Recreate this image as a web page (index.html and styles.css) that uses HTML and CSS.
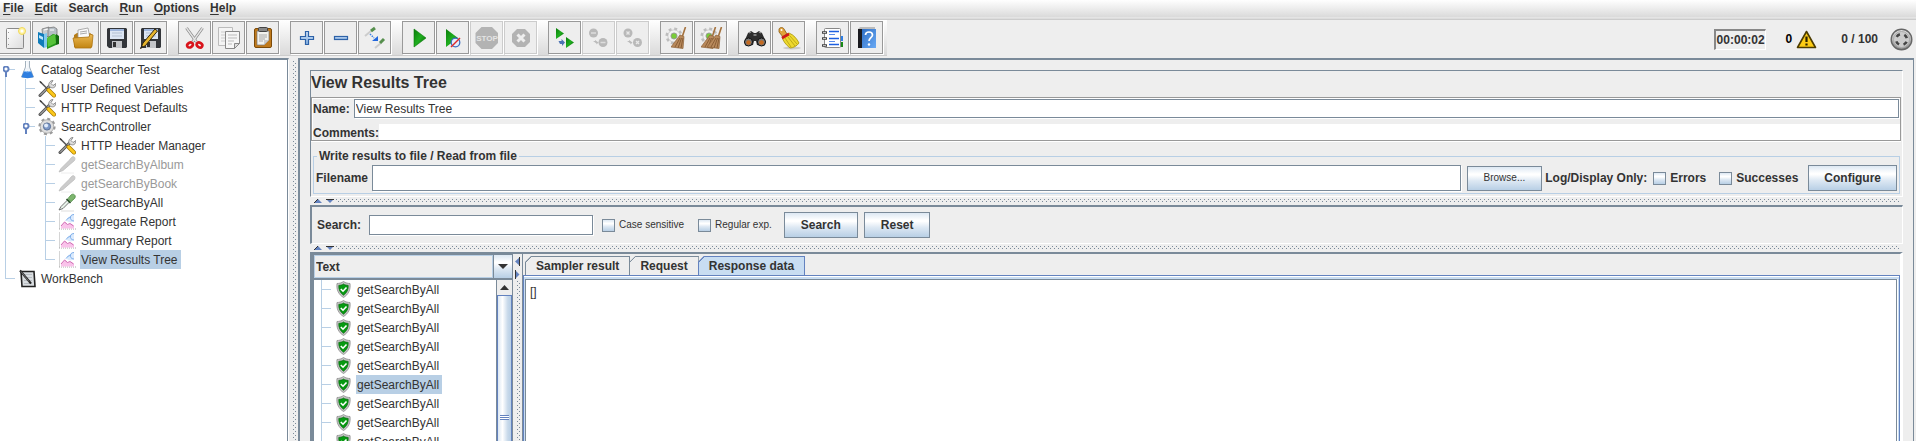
FILE: index.html
```html
<!DOCTYPE html>
<html lang="en">
<head>
<meta charset="utf-8">
<title>Catalog Searcher Test</title>
<link rel="stylesheet" href="styles.css">
</head>
<body>
<svg class="defs" aria-hidden="true">
  <defs>
    <linearGradient id="g-green" x1="0" y1="0" x2="1" y2="1"><stop offset="0" stop-color="#0a7d0a"/><stop offset=".5" stop-color="#1fae1f"/><stop offset="1" stop-color="#045a04"/></linearGradient>
    <linearGradient id="g-folder" x1="0" y1="0" x2="0" y2="1"><stop offset="0" stop-color="#eebb55"/><stop offset="1" stop-color="#c28512"/></linearGradient>
    <linearGradient id="g-paper" x1="0" y1="0" x2="1" y2="1"><stop offset="0" stop-color="#fff"/><stop offset="1" stop-color="#dcdcdc"/></linearGradient>
    <linearGradient id="g-plus" x1="0" y1="0" x2="0" y2="1"><stop offset="0" stop-color="#cfe2f7"/><stop offset="1" stop-color="#85b0e0"/></linearGradient>
    <linearGradient id="g-book" x1="0" y1="0" x2="1" y2="1"><stop offset="0" stop-color="#2f6fc4"/><stop offset="1" stop-color="#6aaaf5"/></linearGradient>
    <linearGradient id="g-metal" x1="0" y1="0" x2="0" y2="1"><stop offset="0" stop-color="#e6e6e6"/><stop offset="1" stop-color="#8c8c8c"/></linearGradient>
    <symbol id="floppy" viewBox="0 0 20 20">
      <path d="M1 0h18l1 1v18l-1 1H2l-2-2V1z" fill="#33363a"/><rect x="3" y="1" width="14" height="10" fill="#dce6f4"/>
      <path d="M3 1h14v2H3z" fill="#9fb6dc"/><path d="M5 5h10M5 8h10" stroke="#b3c0d2"/><rect x="5" y="13" width="10" height="7" fill="#c3c5c8"/><rect x="6" y="14" width="3" height="5" fill="#333"/>
    </symbol>
    <symbol id="tools" viewBox="0 0 18 18">
      <path d="M2 16L12 6" stroke="#555" stroke-width="3" stroke-linecap="round"/><path d="M2 16L12 6" stroke="#ccc" stroke-width="1"/>
      <path d="M11 7c-1-3 1-6 4-6l-2 3 2 2 3-2c0 4-3 5-5 4z" fill="#ddd" stroke="#777" stroke-width=".8"/>
      <path d="M2 2l8 8" stroke="#555" stroke-width="1.6"/><path d="M1 1l3 2-1 1z" fill="#333"/><path d="M10.500 10.500l5.500 5.500" stroke="#a87a00" stroke-width="4" stroke-linecap="round"/><path d="M10.500 10.500l5.500 5.500" stroke="#fcc81c" stroke-width="2.600" stroke-linecap="round"/>
    </symbol>
    <symbol id="dropper" viewBox="0 0 18 18">
      <path d="M1 16.500L3 13l7-7 2 2-7 7z" fill="#e8f2ea" stroke="#666" stroke-width=".9"/><path d="M8.500 5.500l4 4" stroke="#234a23" stroke-width="1.600"/>
      <path d="M10 5l3-3.500c2-2 5.500 0 3.800 3.200L13 8.200z" fill="#7db56e" stroke="#4a8a40" stroke-width=".8"/><path d="M3 17.500h13" stroke="#ddd"/>
    </symbol>
    <symbol id="dropper-off" viewBox="0 0 18 18">
      <path d="M1 16.500L3 13l8-8 2.500-3c2-2 4.500 0 3 3L13 8l-8 7z" fill="#ccc" stroke="#bbb" stroke-width=".8"/><path d="M3 17.500h13" stroke="#eee"/>
    </symbol>
    <symbol id="chart" viewBox="0 0 18 18">
      <path d="M1.500 1v16M1 16.500h17" stroke="#aaa" fill="none" stroke-dasharray="1 1"/>
      <path d="M3 16v-3l4-4 3 3 3-1 3 2v3z" fill="#f9c3ea"/><path d="M3 13.500l3.500-4 3 2.500 2.500-1 3.500 2.500" stroke="#d070b4" fill="none"/>
      <path d="M8 7.500l3-3.500 5-2v6.500l-3 1.500c-2 0-4-1-5-2.500z" fill="#dbeafc"/><path d="M16 2c-3 0-4 2-3.500 4s2 2.500 3.500 2.500M12.500 5c-2 0-3.500 1.500-4.500 3" stroke="#7badea" fill="none"/>
    </symbol>
    <symbol id="flask" viewBox="0 0 18 19">
      <path d="M7.500 1v6L3.500 17h12L11.500 7V1" fill="#eef3f8" stroke="#9aa8b5" stroke-width=".9"/><path d="M6 11h7l2.500 6c-3 1.500-9 1.500-12 0z" fill="#2f7fe0"/><path d="M6 11c2 1 5 1 7 0" stroke="#a9d0fa" fill="none"/><path d="M8.800 2v6" stroke="#fff"/>
    </symbol>
    <symbol id="gear" viewBox="0 0 20 20">
      <circle cx="10" cy="10" r="8.300" fill="none" stroke="#9a9a9a" stroke-width="2.600" stroke-dasharray="3.300 3.220"/><circle cx="10" cy="10" r="7.500" fill="#dedede" stroke="#999" stroke-width=".8"/>
      <circle cx="10" cy="10" r="4" fill="#7d99c8" stroke="#556b92"/><circle cx="9" cy="9" r="2.200" fill="#e0ebfb"/>
    </symbol>
    <symbol id="bench" viewBox="0 0 18 18">
      <path d="M3 2h13l1 15H4z" fill="#d9dde0" stroke="#222" stroke-width="1.600"/><path d="M6 5h8M6 8h8M6 11h8M6 14h8" stroke="#aeb4ba" stroke-width=".8"/><path d="M2 1l11 13" stroke="#222" stroke-width="2"/><path d="M3 2l8 10" stroke="#aaa" stroke-width=".6"/>
    </symbol>
    <symbol id="shield" viewBox="0 0 15 17">
      <path d="M7.500 .5C9.500 2 12 2.500 14 2.500c.8 6-1.500 11-6.500 14C2.500 13.500 .2 8.500 1 2.500c2 0 4.500-.5 6.500-2z" fill="#c5c5c5" stroke="#8c8c8c" stroke-width=".8"/>
      <path d="M7.500 3c1.500 1 3 1.300 4.700 1.400.3 4-1.200 7.300-4.700 9.800C4 11.700 2.500 8.400 2.800 4.400 4.500 4.300 6 4 7.500 3z" fill="#079a12" stroke="#04650b" stroke-width=".7"/><path d="M4.800 8l2.200 2.200 3.500-3.700" stroke="#fff" stroke-width="1.600" fill="none"/>
    </symbol>
    <symbol id="broom" viewBox="0 0 16 22">
      <path d="M14.500 0l-3 9" stroke="#a4713c" stroke-width="1.600"/><path d="M9 8l4 1.500-1 12L0 20z" fill="#b98a5c" stroke="#8c6138" stroke-width=".7"/><path d="M9 11L4 20M10.500 11L7 21M12 11l-2 10" stroke="#7e532c" stroke-width=".8"/>
    </symbol>
    <symbol id="cog" viewBox="0 0 20 20">
      <circle cx="10" cy="10" r="8" fill="none" stroke="#bdbdbd" stroke-width="3" stroke-dasharray="3.200 3.083"/><circle cx="10" cy="10" r="6.800" fill="#f2f2f2" stroke="#bbb" stroke-width=".7"/><circle cx="10" cy="10" r="3.400" fill="#79cc38" stroke="#999"/>
    </symbol>
  </defs>
</svg>

<nav class="menubar" aria-label="Main menu">
  <button type="button"><u>F</u>ile</button>
  <button type="button"><u>E</u>dit</button>
  <button type="button">Search</button>
  <button type="button"><u>R</u>un</button>
  <button type="button"><u>O</u>ptions</button>
  <button type="button"><u>H</u>elp</button>
</nav>

<header class="toolbar">
  <div class="tools" role="toolbar" aria-label="Tools">
    <div class="group">
      <button type="button" aria-label="New"><svg viewBox="1 1 31 31"><rect x="8.500" y="7.500" width="17" height="20" rx="1" fill="url(#g-paper)" stroke="#8a8a8a"/><path d="M10.500 11v1M10.500 17v1M10.500 23v1" stroke="#999"/><circle cx="24" cy="10" r="3.500" fill="#fff3a0" stroke="#f0d85a"/><circle cx="24" cy="10" r="1.500" fill="#fff"/></svg></button>
      <button type="button" aria-label="Templates"><svg viewBox="1 1 31 31"><path d="M10 8l7-2v9l-6 2z" fill="#c8ccd0" stroke="#777" stroke-width=".8"/><path d="M16 7l6-1 3 2v8h-9z" fill="#b6bfc6" stroke="#777" stroke-width=".8"/><path d="M12 9l4-1M18 9h4" stroke="#fff"/><path d="M6 11l6 2v14l-6-5z" fill="#0f7cba"/><path d="M12 13l3-1v14l-3 1z" fill="#7fc8ee"/><path d="M7 14l4 2v3l-4-2z" fill="#bfe6fa"/><path d="M15 17l6-4 3 1v10l-9 4z" fill="#25951c"/><path d="M15 17l8-4 1 9-8 4z" fill="#57c33b"/><path d="M24 13l3 2v8l-3 1z" fill="#136a10"/></svg></button>
      <button type="button" aria-label="Open"><svg viewBox="1 1 31 31"><path d="M8 14l3-2h13l2 2v12H8z" fill="#b67c16"/><path d="M12 9l10-2 2 10H12z" fill="#fafafa" stroke="#999" stroke-width=".8"/><path d="M14 11l7-1M14 13l7-1" stroke="#aaa"/><path d="M7 17l16-1 1-3 3 1-1 11-1 2H9z" fill="url(#g-folder)" stroke="#ad7512" stroke-width=".8"/></svg></button>
      <button type="button" aria-label="Save"><svg viewBox="1 1 31 31"><use href="#floppy" x="7" y="7" width="20" height="20"/></svg></button>
      <button type="button" aria-label="Save as"><svg viewBox="1 1 31 31"><use href="#floppy" x="7" y="7" width="20" height="20"/><path d="M6.500 27.500L9 22 21 8l2.500 2L11.500 24.500z" fill="#e7b62d" stroke="#33270a"/><path d="M6.500 27.500l1-3.500 2 2z" fill="#222"/></svg></button>
    </div>
    <div class="group">
      <button type="button" aria-label="Cut"><svg viewBox="1 1 31 31"><path d="M8.500 7l10 14M24.500 7l-10 14" stroke="#888" stroke-width="3"/><path d="M8.500 7l10 14M24.500 7l-10 14" stroke="#e5e5e5" stroke-width="1.400"/><ellipse cx="12" cy="24" rx="3" ry="2.300" transform="rotate(-35 12 24)" fill="none" stroke="#d8141b" stroke-width="2.600"/><ellipse cx="21.500" cy="24" rx="3" ry="2.300" transform="rotate(35 21.500 24)" fill="none" stroke="#d8141b" stroke-width="2.600"/></svg></button>
      <button type="button" aria-label="Copy"><svg viewBox="1 1 31 31"><path d="M6.500 6.500h14v18h-14z" fill="#f4f4f4" stroke="#bbb"/><path d="M9 11h8M9 14h5M9 17h5M9 20h5" stroke="#ccc"/><path d="M13.500 10.500h14v12l-5 5h-9z" fill="#f6f6f6" stroke="#888"/><path d="M16 14h9M16 17h9M16 20h6M16 23h4" stroke="#bbb"/><path d="M22.500 27.500v-5h5z" fill="#ddd" stroke="#888"/></svg></button>
      <button type="button" aria-label="Paste"><svg viewBox="1 1 31 31"><rect x="8.500" y="7.500" width="17" height="19" rx="1.500" fill="#c07a1c" stroke="#7c4b0a"/><path d="M11 10h12v9l-5 5h-7z" fill="#f2f2ee" stroke="#777" stroke-width=".7"/><path d="M13 14h8M13 16h8M13 18h6M13 20h4" stroke="#aaa"/><path d="M18 24v-5h5z" fill="#ccc"/><rect x="12.500" y="6.500" width="9" height="4" rx="1" fill="#888" stroke="#444"/></svg></button>
    </div>
    <div class="group">
      <button type="button" aria-label="Expand all"><svg viewBox="1 1 31 31"><path d="M15.500 10.500h3v5h5v3h-5v5h-3v-5h-5v-3h5z" fill="url(#g-plus)" stroke="#2d62a8" stroke-width="1.200"/></svg></button>
      <button type="button" aria-label="Collapse all"><svg viewBox="1 1 31 31"><rect x="10.500" y="15.500" width="13" height="3" fill="url(#g-plus)" stroke="#2d62a8" stroke-width="1.200"/></svg></button>
      <button type="button" aria-label="Toggle"><svg viewBox="1 1 31 31"><path d="M7 15l6-5" stroke="#ccc" stroke-width="2"/><path d="M13 10l4-3" stroke="#568f4d" stroke-width="3"/><path d="M17 27l6-5" stroke="#ccc" stroke-width="2"/><path d="M22 22l4-4" stroke="#568f4d" stroke-width="3"/><path d="M12 13l4 4" stroke="#3b83e8" stroke-width="1.500" stroke-dasharray="1.500 1"/><path d="M20 15v5h-6z" fill="#2167dd"/></svg></button>
    </div>
    <div class="group">
      <button type="button" aria-label="Start"><svg viewBox="1 1 31 31"><path d="M12 8l12 9-12 9z" fill="url(#g-green)" stroke="#0a7a0a" stroke-width=".6"/></svg></button>
      <button type="button" aria-label="Start no pauses"><svg viewBox="1 1 31 31"><path d="M10 8l12 9-12 9z" fill="url(#g-green)"/><circle cx="19.500" cy="21.500" r="4.300" fill="#e4eefc" stroke="#3d6fc0" stroke-width="1.300"/><path d="M15 26l9-9" stroke="#e02828" stroke-width="1.400"/></svg></button>
      <button type="button" disabled aria-label="Stop"><svg viewBox="1 1 31 31"><path d="M11.500 6h10.500l6 6v10l-6 6H11.500l-6-6V12z" fill="#b3b3b3"/><text x="17" y="20" class="stop">STOP</text></svg></button>
      <button type="button" disabled aria-label="Shutdown"><svg viewBox="1 1 31 31"><path d="M13 8h8l5 5v8l-5 5h-8l-5-5v-8z" fill="#b3b3b3"/><path d="M13.500 13.500l7 7M20.500 13.500l-7 7" stroke="#eee" stroke-width="3"/></svg></button>
    </div>
    <div class="group">
      <button type="button" aria-label="Remote start all"><svg viewBox="1 1 31 31"><path d="M8 7l8 5.500L8 18z" fill="url(#g-green)"/><path d="M18 16l8 5.500L18 27z" fill="url(#g-green)"/><path d="M10.500 20h3v-2l3.500 3.500-3 3.500v-2h-2z" fill="#4e74b4"/></svg></button>
      <button type="button" disabled aria-label="Remote stop all"><svg viewBox="1 1 31 31"><circle cx="11.500" cy="12" r="4.500" fill="#b9b9b9"/><circle cx="21" cy="21.500" r="4.500" fill="#b9b9b9"/><path d="M9 12h5M18.500 21.500h5" stroke="#ddd" stroke-width="1.500"/><path d="M11 20h2v-1l3.500 2.500-2 2v-1z" fill="#bbb"/></svg></button>
      <button type="button" disabled aria-label="Remote shutdown all"><svg viewBox="1 1 31 31"><circle cx="12" cy="12" r="4.500" fill="#b9b9b9"/><circle cx="21.500" cy="21.500" r="4.500" fill="#b9b9b9"/><path d="M10.500 10.500l3 3M13.500 10.500l-3 3M20 20l3 3M23 20l-3 3" stroke="#e8e8e8" stroke-width="1.300"/><path d="M11 20h2v-1l3.500 2.500-2 2v-1z" fill="#bbb"/></svg></button>
    </div>
    <div class="group">
      <button type="button" aria-label="Clear"><svg viewBox="1 1 31 31"><use href="#cog" x="5" y="6" width="18" height="18"/><use href="#broom" x="11" y="6" width="16" height="22"/></svg></button>
      <button type="button" aria-label="Clear all"><svg viewBox="1 1 31 31"><use href="#cog" x="6" y="6" width="18" height="18"/><use href="#broom" x="7" y="6" width="16" height="22"/><use href="#broom" x="13" y="6" width="16" height="22"/></svg></button>
    </div>
    <div class="group">
      <button type="button" aria-label="Find"><svg viewBox="1 1 31 31"><path d="M6 21l4-9 3-2 3 2h2l3-2 3 2 4 9-2 4-7-1-1-4h-2l-1 4-7 1z" fill="#2d2d2d"/><path d="M11 12l2-1M21 11l2 1M15.500 14h3" stroke="#999" stroke-width="1.300"/><circle cx="10.500" cy="21" r="4" fill="#777" stroke="#111"/><circle cx="23.500" cy="21" r="4" fill="#777" stroke="#111"/><circle cx="10.500" cy="21.500" r="2.300" fill="#c46a21"/><circle cx="23.500" cy="21.500" r="2.300" fill="#c46a21"/></svg></button>
      <button type="button" aria-label="Reset search"><svg viewBox="1 1 31 31"><ellipse cx="20" cy="27" rx="9" ry="1.500" fill="#ccc"/><path d="M7 8c1-2 4-2 5 0l3 5-4 3-4-5z" fill="#e0a33c" stroke="#8b5a12" stroke-width=".8"/><circle cx="9.500" cy="9" r="1" fill="#fff"/><path d="M10 16l7-4c5 2 8 6 10 10-2 3-6 5-9 5-4-3-7-7-8-11z" fill="#eed92e" stroke="#a4920d" stroke-width=".8"/><path d="M13 17l6 9M16 16l7 9M18 15l7 8" stroke="#b8a516" stroke-width=".9"/><path d="M10 17l7-4" stroke="#cf1a1a" stroke-width="2.600"/></svg></button>
    </div>
    <div class="group">
      <button type="button" aria-label="Function helper"><svg viewBox="1 1 31 31"><rect x="22" y="15" width="5" height="5" fill="#2e7fe6"/><rect x="22" y="21" width="5" height="5" fill="#188a18"/><rect x="8.500" y="7.500" width="16" height="19" rx="1" fill="#fff" stroke="#888"/><path d="M13 10.500h10M13 17.500h10M13 23.500h10" stroke="#1d5fe0" stroke-width="1.300"/><path d="M13 13.500h6M13 20.500h6" stroke="#5a8bea"/><path d="M6 11.500h5M6 17.500h5M6 24.500h5" stroke="#444" stroke-width="2.400"/><path d="M7 11.500h3M7 17.500h3M7 24.500h3" stroke="#ddd" stroke-width=".8"/></svg></button>
      <button type="button" aria-label="Help"><svg viewBox="1 1 31 31"><path d="M8 8l2-2h15v2z" fill="#bbb"/><rect x="8" y="8" width="4" height="19" fill="#1b1b1f"/><rect x="12" y="8" width="14" height="19" fill="url(#g-book)"/><path d="M15.500 14c0-4 7-4 7 0 0 2.500-3.500 3-3.500 6" fill="none" stroke="#fff" stroke-width="1.700"/><circle cx="19" cy="23.500" r="1.200" fill="#fff"/></svg></button>
    </div>
  </div>
  <div class="status">
    <output class="timer">00:00:02</output>
    <span class="errors">0 <svg width="21" height="19" viewBox="0 0 21 19" role="img" aria-label="Errors logged"><path d="M10.500 1.500L19.500 17.500H1.500z" fill="#fccb14" stroke="#4d3c00" stroke-width="1.600" stroke-linejoin="round"/><path d="M10.500 6.500v5.500M10.500 13.500v2" stroke="#2a2200" stroke-width="2.200"/></svg></span>
    <span class="threads">0 / 100</span>
    <svg class="running" width="23" height="23" viewBox="0 0 23 23" role="img" aria-label="Idle"><circle cx="11.500" cy="11.500" r="10.300" fill="url(#g-metal)" stroke="#666" stroke-width="1.400"/><circle cx="11.500" cy="11.500" r="8" fill="#ccc" stroke="#aaa"/><circle cx="11.500" cy="11.500" r="5.500" fill="none" stroke="#444" stroke-width="2.600" stroke-dasharray="4 4.640" stroke-dashoffset="-2.300"/></svg>
  </div>
</header>

<div class="workspace">
  <aside class="plan">
    <ul class="tree">
      <li>
        <div class="row"><button type="button" class="knob" aria-label="Collapse Catalog Searcher Test"></button><svg><use href="#flask"/></svg><span>Catalog Searcher Test</span></div>
        <ul>
          <li><div class="row"><svg><use href="#tools"/></svg><span>User Defined Variables</span></div></li>
          <li><div class="row"><svg><use href="#tools"/></svg><span>HTTP Request Defaults</span></div></li>
          <li>
            <div class="row"><button type="button" class="knob" aria-label="Collapse SearchController"></button><svg><use href="#gear"/></svg><span>SearchController</span></div>
            <ul>
              <li><div class="row"><svg><use href="#tools"/></svg><span>HTTP Header Manager</span></div></li>
              <li><div class="row off"><svg><use href="#dropper-off"/></svg><span>getSearchByAlbum</span></div></li>
              <li><div class="row off"><svg><use href="#dropper-off"/></svg><span>getSearchByBook</span></div></li>
              <li><div class="row"><svg><use href="#dropper"/></svg><span>getSearchByAll</span></div></li>
              <li><div class="row"><svg><use href="#chart"/></svg><span>Aggregate Report</span></div></li>
              <li><div class="row"><svg><use href="#chart"/></svg><span>Summary Report</span></div></li>
              <li><div class="row selected"><svg><use href="#chart"/></svg><span>View Results Tree</span></div></li>
            </ul>
          </li>
        </ul>
      </li>
      <li><div class="row"><svg><use href="#bench"/></svg><span>WorkBench</span></div></li>
    </ul>
  </aside>
  <div class="split-v"></div>

  <main class="editor">
    <section class="config">
      <h1>View Results Tree</h1>
      <div class="identity">
        <div class="field"><label for="name">Name:</label><input id="name" class="text" type="text" value="View Results Tree"></div>
        <div class="field comments"><label for="comments">Comments:</label><input id="comments" type="text"></div>
      </div>
      <fieldset class="file">
        <legend>Write results to file / Read from file</legend>
        <div class="file-row">
          <label for="filename">Filename</label>
          <input id="filename" class="text" type="text">
          <button type="button" class="btn small browse">Browse...</button>
          <span class="only">Log/Display Only:</span>
          <label class="check"><input type="checkbox">Errors</label>
          <label class="check"><input type="checkbox">Successes</label>
          <button type="button" class="btn configure">Configure</button>
        </div>
      </fieldset>
    </section>
    <div class="split-h"><svg width="22" height="5" viewBox="0 0 22 5"><path d="M5 0l4 4H1z" fill="#6382bf"/><path d="M5 0L1 4" stroke="#333"/><path d="M13 0h8l-4 4z" fill="#6382bf"/><path d="M13 .5h8" stroke="#333"/></svg></div>
    <section class="search">
      <label for="query">Search:</label>
      <input id="query" class="text" type="text">
      <label class="check small"><input type="checkbox">Case sensitive</label>
      <label class="check small"><input type="checkbox">Regular exp.</label>
      <button type="button" class="btn">Search</button>
      <button type="button" class="btn">Reset</button>
    </section>
    <div class="split-h"><svg width="22" height="5" viewBox="0 0 22 5"><path d="M5 0l4 4H1z" fill="#6382bf"/><path d="M5 0L1 4" stroke="#333"/><path d="M13 0h8l-4 4z" fill="#6382bf"/><path d="M13 .5h8" stroke="#333"/></svg></div>
    <section class="results">
      <div class="samples">
        <div class="combo">
          <select aria-label="Renderer"><option>Text</option></select>
          <span class="combo-arrow"><svg width="10" height="5" viewBox="0 0 10 5"><path d="M0 0h10L5 5z" fill="#333"/></svg></span>
        </div>
        <div class="list">
          <ul class="tree">
            <li><div class="row"><svg><use href="#shield"/></svg><span>getSearchByAll</span></div></li>
            <li><div class="row"><svg><use href="#shield"/></svg><span>getSearchByAll</span></div></li>
            <li><div class="row"><svg><use href="#shield"/></svg><span>getSearchByAll</span></div></li>
            <li><div class="row"><svg><use href="#shield"/></svg><span>getSearchByAll</span></div></li>
            <li><div class="row"><svg><use href="#shield"/></svg><span>getSearchByAll</span></div></li>
            <li><div class="row selected"><svg><use href="#shield"/></svg><span>getSearchByAll</span></div></li>
            <li><div class="row"><svg><use href="#shield"/></svg><span>getSearchByAll</span></div></li>
            <li><div class="row"><svg><use href="#shield"/></svg><span>getSearchByAll</span></div></li>
            <li><div class="row"><svg><use href="#shield"/></svg><span>getSearchByAll</span></div></li>
          </ul>
          <div class="scrollbar">
            <button type="button" aria-label="Scroll up"><svg width="9" height="5" viewBox="0 0 9 5"><path d="M0 5h9L4.500 0z" fill="#333"/></svg></button>
            <div class="thumb"><i></i></div>
          </div>
        </div>
      </div>
      <div class="split-v inner"><svg width="5" height="22" viewBox="0 0 5 22"><path d="M5 0v9L0 4.500z" fill="#6382bf"/><path d="M4.500 0v9" stroke="#333"/><path d="M0 13v9l4.500-4.500z" fill="#6382bf"/><path d="M.5 13v9" stroke="#333"/></svg></div>
      <div class="detail">
        <div class="tabs" role="tablist">
          <button type="button" role="tab" aria-selected="false">Sampler result</button>
          <button type="button" role="tab" aria-selected="false">Request</button>
          <button type="button" role="tab" aria-selected="true">Response data</button>
        </div>
        <div class="body"><textarea readonly aria-label="Response data">[]</textarea></div>
      </div>
    </section>
  </main>
</div>
</body>
</html>
```
FILE: styles.css
```css
:root {
  --edge: #7a8a99;
  --panel: #eee;
  --blue: #6382bf;
  --pale: #b8cfe5;
  --tab: #c8ddf2;
  --ink: #333;
  --face: linear-gradient(#dde8f3, #fff 30%, #fff 35%, #dde8f3 60%, #b8cfe5);
  --dot: conic-gradient(from 270deg at 1px 1px, #7a8a99 90deg, transparent 0);
}

* { box-sizing: border-box; }

body {
  margin: 0;
  height: 100vh;
  overflow: hidden;
  display: flex;
  flex-direction: column;
  background: var(--panel);
  color: var(--ink);
  font: bold 12px/14px "Liberation Sans", Arial, sans-serif;
}

button, input, select, textarea {
  font: inherit;
  color: inherit;
  margin: 0;
  padding: 0;
  border: 0;
  border-radius: 0;
  background: none;
  outline: 0;
}

.defs { position: absolute; width: 0; height: 0; }

/* Menu bar and toolbar */
.menubar {
  flex: none;
  display: flex;
  gap: 11px;
  height: 20px;
  padding: 0 3px 4px;
  background: linear-gradient(#fff, #dadada 17px, #eee 18px, #eee 18px, #ccc 19px);
}
.menubar u { text-underline-offset: 2px; }

.toolbar {
  flex: none;
  display: flex;
  justify-content: space-between;
  height: 38px;
}
.tools {
  display: flex;
  gap: 10px;
  padding: 1px 3px 0 0;
  margin-left: -2px;
  background: linear-gradient(#fff, #dadada 35px, #ccc 35px, #ccc 36px, #eee 36px);
}
.group { display: flex; }
.group button {
  width: 33px;
  height: 33px;
  margin-right: 1px;
  border: 1px solid #999;
  background: var(--panel);
  box-shadow: 1px 1px #fff;
}
.group button:disabled { border-color: #ccc; }
.group svg { display: block; width: 31px; height: 31px; }
.stop { font-size: 8px; text-anchor: middle; fill: #e4e4e4; }

.status {
  display: flex;
  align-items: center;
  padding-right: 3px;
}
.timer {
  width: 52px;
  padding: 2px 0 2px 1px;
  border: 1px solid #fff;
  border-top: 2px solid #888;
  border-left: 2px solid #888;
}
.errors { display: flex; align-items: center; gap: 4px; margin-left: 20px; color: #000; }
.threads { margin: 0 12px 0 24px; }

/* Split panes */
.workspace { flex: 1; min-height: 0; display: flex; }
.split-v {
  flex: none;
  width: 9px;
  padding: 2px 2px 0 4px;
  background: var(--dot) 0 1px / 4px 4px, var(--dot) 2px 3px / 4px 4px, var(--panel);
  background-clip: content-box, content-box, border-box;
  background-origin: content-box;
}
.split-h {
  flex: none;
  height: 8px;
  padding: 2px 3px 2px 26px;
  background: var(--dot) 0 0 / 4px 4px, var(--dot) 2px 2px / 4px 4px, var(--panel);
  background-clip: content-box, content-box, border-box;
  background-origin: content-box;
}
.split-h svg { display: block; margin-left: -23px; }
.split-v.inner { padding: 26px 2px 0 4px; }
.split-v.inner svg { display: block; margin: -23px 0 0 -2px; }

/* Trees */
.plan {
  flex: none;
  width: 289px;
  border-top: 2px solid var(--edge);
  border-right: 1px solid #fff;
  background: #fff;
  box-shadow: inset -1px 0 var(--edge);
}
.tree, .tree ul { list-style: none; margin: 0; padding: 0; font-weight: normal; }
.tree ul { padding-left: 20px; }
.tree li {
  background:
    linear-gradient(var(--pale), var(--pale)) 5px 9px / 10px 1px no-repeat,
    linear-gradient(var(--pale), var(--pale)) 5px 0 / 1px 100% no-repeat;
}
.plan .tree li:last-child {
  background-size: 10px 1px, 1px 10px;
}
.plan > .tree > li:first-child { background-position: 5px 9px, 5px 10px; }
.row { display: flex; align-items: center; height: 19px; padding-left: 18px; }
.row svg { flex: none; width: 18px; height: 19px; margin-right: 4px; }
.row span { height: 19px; padding: 0 3px 0 1px; line-height: 21px; white-space: nowrap; }
.row.off { color: #999; }
.row.selected span { background: var(--pale); }
.knob {
  width: 7px;
  height: 13px;
  margin: 6px 8px 0 -15px;
  background:
    radial-gradient(circle at 3px 3px, #fff 1px, var(--blue) 2px, var(--blue) 3px, transparent 4px),
    linear-gradient(var(--blue), var(--blue)) 2px 5px / 2px 6px no-repeat;
}

/* Editor */
.editor {
  flex: 1;
  min-width: 0;
  display: flex;
  flex-direction: column;
  margin-right: 2px;
  padding: 10px 10px 0;
  border: solid var(--edge);
  border-width: 2px 1px 0 2px;
}
.text {
  border: 1px solid var(--edge);
  background: #fff;
  box-shadow: 1px 1px #fff;
}
.config {
  border: 1px solid;
  border-color: var(--edge) #fff #fff var(--edge);
}
h1 { margin: 0; padding-bottom: 2px; font-size: 16px; line-height: 24px; }
.identity {
  margin-right: 1px;
  border: 1px solid #999;
  box-shadow: 0 1px #fff, inset 1px 1px #fff;
}
.field { display: flex; align-items: center; padding: 1px 1px 0; }
.field input { flex: 1; min-width: 0; font-weight: normal; }
#name { height: 19px; margin-left: 4px; padding: 1px 0 0 1px; }
.comments { margin-top: 6px; padding: 0 0 0 1px; }
.comments label { padding-top: 2px; }
#comments { height: 16px; background: #fff; }

.file {
  min-width: 0;
  margin: 8px 2px 2px;
  padding: 2px 2px 2px;
  border: 1px solid var(--pale);
}
.file legend { margin-left: 1px; padding: 0 2px; }
.file-row { display: flex; align-items: center; }
#filename { flex: 1; min-width: 0; height: 26px; margin: 0 6px 0 4px; }
.btn {
  height: 26px;
  padding: 0 16px;
  border: 1px solid var(--edge);
  background: var(--face);
}
.small { font-size: 10px; font-weight: normal; }
.browse { height: 25px; margin-right: 3px; padding: 0 16px; }
.only { margin-right: 6px; }
.configure { padding: 0 15px; }
.check { display: flex; align-items: center; gap: 4px; margin-right: 13px; }
.check + .configure { margin-left: -3px; }
.check input {
  appearance: none;
  width: 13px;
  height: 13px;
  border: 1px solid var(--edge);
  background: var(--face);
}

.search {
  display: flex;
  align-items: center;
  height: 39px;
  padding: 0 5px;
  border: solid var(--edge);
  border-width: 2px 1px 1px 2px;
  border-right-color: #fff;
  border-bottom-color: #fff;
}
#query { width: 224px; height: 20px; margin: 0 9px 0 8px; font-weight: normal; }
.search .check { margin-right: 14px; }
.search .btn { margin-right: 6px; }
.search .check + .btn { margin-left: -2px; }

/* Results */
.results { flex: 1; min-height: 0; display: flex; border-top: 2px solid var(--edge); border-right: 3px solid #fff; }
.samples {
  flex: none;
  display: flex;
  flex-direction: column;
  width: 203px;
  border: solid var(--edge);
  border-width: 1px 1px 0 4px;
}
.combo {
  flex: none;
  display: flex;
  height: 25px;
  border-bottom: 2px solid var(--edge);
}
.combo select {
  flex: 1;
  appearance: none;
  padding-left: 1px;
  border: 1px solid var(--pale);
}
.combo-arrow {
  display: flex;
  align-items: center;
  justify-content: center;
  width: 19px;
  border-left: 1px solid var(--edge);
  background: var(--face);
}
.list { flex: 1; min-height: 0; display: flex; background: #fff; }
.list .tree { flex: 1; min-width: 0; overflow: hidden; padding-left: 2px; }
.list .row svg { width: 15px; height: 17px; margin: 0 5px 0 2px; }
.scrollbar {
  display: flex;
  flex-direction: column;
  width: 16px;
  border-left: 1px solid var(--edge);
  background: var(--panel);
}
.scrollbar button { height: 15px; flex: none; display: flex; align-items: center; justify-content: center; }
.thumb {
  flex: 1;
  display: grid;
  justify-content: center;
  padding-top: 119px;
  border: 1px solid var(--blue);
  border-bottom: 0;
  background: linear-gradient(90deg, #dde8f3, #fff 35%, #c8d9ea 75%, #b8cfe5);
}
.thumb i { width: 9px; height: 5px; background: repeating-linear-gradient(var(--blue) 0 1px, #fff 1px 2px); }

.detail {
  flex: 1;
  min-width: 0;
  display: flex;
  flex-direction: column;
  border-left: 1px solid var(--edge);
}
.tabs { flex: none; display: flex; height: 21px; padding: 2px 0 0 2px; }
.tabs button {
  padding: 0 10px;
  border: 1px solid var(--edge);
  border-width: 1px 1px 0 1px;
  margin-right: -1px;
  background: linear-gradient(135deg, var(--edge) 5px, transparent 5px) border-box;
  clip-path: polygon(6px 0, 100% 0, 100% 100%, 0 100%, 0 6px);
}
.tabs [aria-selected="true"] {
  border-color: var(--blue);
  background: linear-gradient(135deg, var(--blue) 5px, var(--tab) 5px) border-box;
}
.body {
  flex: 1;
  min-height: 0;
  display: flex;
  padding: 3px 2px 0 1px;
  border: 1px solid var(--blue);
  border-width: 1px 1px 0;
  background: var(--tab);
  box-shadow: inset 0 1px #fff;
}
textarea {
  flex: 1;
  resize: none;
  padding: 5px 4px;
  border: 1px solid var(--edge);
  border-bottom: 0;
  background: #fff;
  font-weight: normal;
  box-shadow: 1px 0 #fff;
}
```
